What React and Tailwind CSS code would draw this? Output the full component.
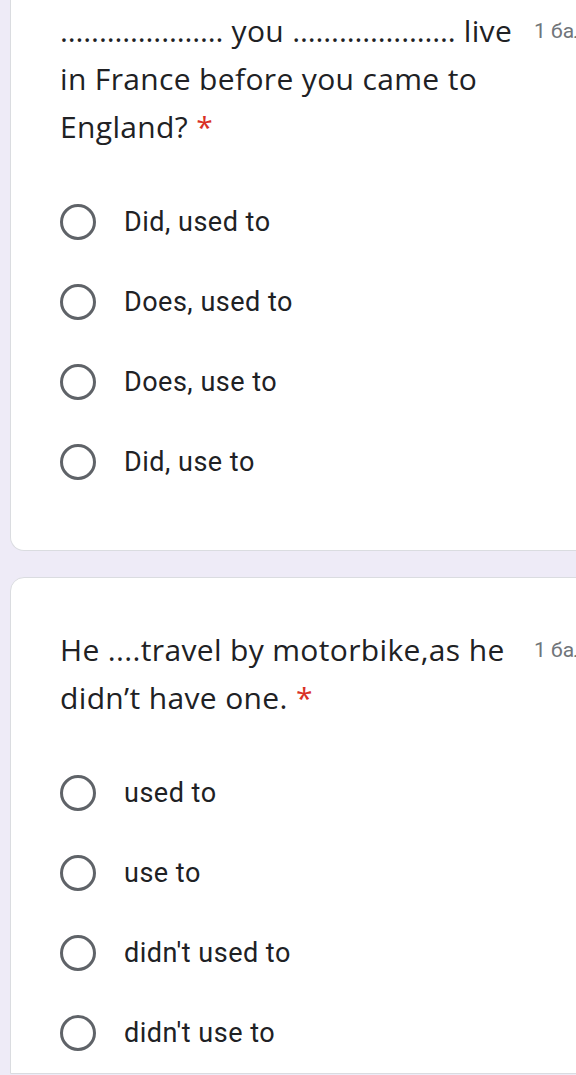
import React from 'react';

const DOTS = '.....................';

const QUESTIONS = [
  {
    title: (
      <>
        <span className="tracking-[-0.1px]">{DOTS}</span> you <span className="tracking-[-0.1px]">{DOTS}</span> live in
        France before you came to England?
      </>
    ),
    options: ['Did, used to', 'Does, used to', 'Does, use to', 'Did, use to'],
    first: true,
  },
  {
    title: 'He ....travel by motorbike,as he didn’t have one.',
    options: ['used to', 'use to', "didn't used to", "didn't use to"],
  },
];

function Radio() {
  return <span className="block w-[36px] h-[36px] rounded-full border-[3px] border-[#5f6368] shrink-0" />;
}

function QuestionCard({ title, options, first }) {
  return (
    <div
      className={`bg-white border border-[#dadce0] mr-[-40px] pl-[49px] ${
        first ? 'border-t-0 rounded-bl-[14px] pt-[7px] pb-[48px]' : 'rounded-tl-[14px] pt-[48px]'
      }`}
    >
      <div className="flex items-start">
        <div className="w-[458px] shrink-0 text-[30px] tracking-[0.35px] leading-[48px] text-[#202124] font-['Open_Sans',sans-serif]">
          {title} <span className="text-[#d93025]">*</span>
        </div>
        <div className="ml-[16px] text-[21px] leading-[48px] text-[#70757a] whitespace-nowrap font-['Roboto',sans-serif]">
          1 балл
        </div>
      </div>
      <div className="mt-[31px] flex flex-col">
        {options.map((opt) => (
          <div key={opt} className="h-[80px] flex items-center">
            <Radio />
            <span className="ml-[28px] text-[27px] tracking-[0.5px] text-[#202124] font-['Roboto',sans-serif]">
              {opt}
            </span>
          </div>
        ))}
      </div>
    </div>
  );
}

export default function App() {
  return (
    <div className="w-[576px] h-[1075px] overflow-hidden bg-[#eeebf7] pl-[10px] flex flex-col gap-[26px]">
      {QUESTIONS.map((q, i) => (
        <QuestionCard key={i} {...q} />
      ))}
    </div>
  );
}
